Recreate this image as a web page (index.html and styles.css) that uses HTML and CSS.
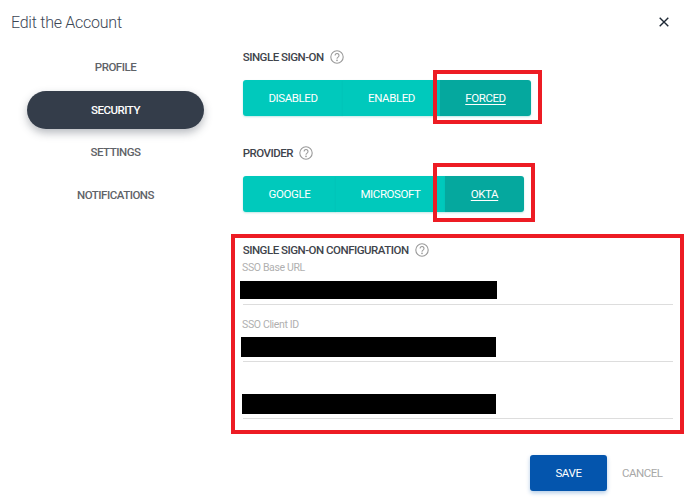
FILE: index.html
```html
<!DOCTYPE html>
<html lang="en">
<head>
<meta charset="utf-8">
<title>Edit the Account</title>
<link rel="stylesheet" href="styles.css">
</head>
<body>
<div class="dialog">
  <header class="head">
    <h1 class="title">Edit the Account</h1>
    <svg class="close" viewBox="0 0 10 10" width="10" height="10"><path d="M.7.7l8.6 8.6M9.3.7L.7 9.3"/></svg>
  </header>
  <div class="body">
    <nav class="side">
      <a class="tab">PROFILE</a>
      <a class="tab tab-on">SECURITY</a>
      <a class="tab">SETTINGS</a>
      <a class="tab">NOTIFICATIONS</a>
    </nav>
    <main class="main">
      <div class="label">SINGLE SIGN-ON <svg class="help" viewBox="0 0 14 14" width="14" height="14"><circle cx="7" cy="7" r="6.2"/><path d="M5.1 5.5a1.95 1.95 0 1 1 3 1.6c-.7.5-1.1.8-1.1 1.6"/><circle class="dot" cx="7" cy="10.4" r=".8"/></svg></div>
      <div class="group">
        <button class="seg seg-a">DISABLED</button>
        <button class="seg seg-b">ENABLED</button>
        <button class="seg seg-c seg-on">FORCED</button>
      </div>
      <div class="label label-next">PROVIDER <svg class="help" viewBox="0 0 14 14" width="14" height="14"><circle cx="7" cy="7" r="6.2"/><path d="M5.1 5.5a1.95 1.95 0 1 1 3 1.6c-.7.5-1.1.8-1.1 1.6"/><circle class="dot" cx="7" cy="10.4" r=".8"/></svg></div>
      <div class="group">
        <button class="seg seg-d">GOOGLE</button>
        <button class="seg seg-e">MICROSOFT</button>
        <button class="seg seg-f seg-on">OKTA</button>
      </div>
      <div class="label label-config">SINGLE SIGN-ON CONFIGURATION <svg class="help" viewBox="0 0 14 14" width="14" height="14"><circle cx="7" cy="7" r="6.2"/><path d="M5.1 5.5a1.95 1.95 0 1 1 3 1.6c-.7.5-1.1.8-1.1 1.6"/><circle class="dot" cx="7" cy="10.4" r=".8"/></svg></div>
      <div class="field field-first">
        <div class="hint">SSO Base URL</div>
        <div class="input"><div class="redact redact-a"></div></div>
      </div>
      <div class="field">
        <div class="hint">SSO Client ID</div>
        <div class="input"><div class="redact redact-b"></div></div>
      </div>
      <div class="field">
        <div class="hint">&nbsp;</div>
        <div class="input"><div class="redact redact-c"></div></div>
      </div>
    </main>
  </div>
  <footer class="foot">
    <button class="save">SAVE</button>
    <button class="cancel">CANCEL</button>
  </footer>
  <div class="mark mark-1"></div>
  <div class="mark mark-2"></div>
  <div class="mark mark-3"></div>
</div>
</body>
</html>
```
FILE: styles.css
```css
* { box-sizing: border-box; }
html, body { margin: 0; padding: 0; background: #fff; }
body { font-family: Roboto, "Liberation Sans", sans-serif; }
.dialog { position: relative; width: 688px; height: 502px; overflow: hidden; }

.head { height: 44px; display: flex; align-items: center; justify-content: space-between; padding: 0 19px 0 11px; }
.title { margin: 0; font-size: 16px; font-weight: 300; color: #3c4654; letter-spacing: -.25px; }
.close { fill: none; stroke: #1f2935; stroke-width: 1.4; }

.body { display: flex; }
.side { width: 231px; padding: 4px 0 0 27px; display: flex; flex-direction: column; flex: none; }
.tab { width: 177px; height: 38px; margin-bottom: 4px; display: flex; align-items: center; justify-content: center; font-size: 11.5px; letter-spacing: -.5px; font-weight: 500; color: #5f6368; border-radius: 19px; }
.tab:nth-child(odd) { margin-bottom: 5px; }
.tab-on { background: #343d4a; color: #fff; box-shadow: 0 4px 8px rgba(52, 61, 74, .35); }

.main { width: 440px; margin-left: 12px; padding-top: 3px; flex: none; }
.label { height: 20px; padding-bottom: 1px; display: flex; align-items: center; gap: 5px; font-size: 11.5px; letter-spacing: -.5px; font-weight: 500; color: #3f444c; margin-left: -.3px; }
.label-next { margin-top: 27px; }
.label-config { margin-top: 28px; }
.help { fill: none; stroke: #9a9a9a; stroke-width: 1.1; margin-left: 1px; }
.help .dot { fill: #9a9a9a; stroke: none; }

.group { margin-top: 13px; display: flex; height: 36px; }
.seg { border: 0; padding: 0; height: 36px; background: #00c9bc; color: #fff; font: 400 11.5px Roboto, "Liberation Sans", sans-serif; letter-spacing: -.4px; box-shadow: 0 1px 2px rgba(0, 160, 150, .25); }
.seg:first-child { border-radius: 3px 0 0 3px; }
.seg:last-child { border-radius: 0 3px 3px 0; }
.seg-on { background: #05a89e; text-decoration: underline; text-underline-offset: 2px; }
.seg-a { width: 100px; }
.seg-b { width: 97px; }
.seg-c { width: 91px; }
.seg-d { width: 93px; }
.seg-e { width: 109px; }
.seg-f { width: 79px; }

.field { margin-top: 12px; padding-right: 10px; }
.field-first { margin-top: 0; }
.hint { height: 14px; line-height: 16px; font-size: 10.5px; letter-spacing: -.35px; color: #b0b0b0; margin-left: -1px; }
.input { height: 31px; border-bottom: 1.5px solid #ddd; padding-top: 6px; }
.redact { height: 20px; background: #000; }
.redact-a { width: 257px; height: 18px; margin: 1px 0 0 -3px; }
.redact-b { width: 255px; margin-left: -2px; }
.redact-c { width: 254px; margin-left: -1px; }

.foot { margin-top: 36px; display: flex; align-items: center; padding-left: 530px; }
.save { width: 77px; height: 36px; border: 0; border-radius: 3px; background: #0455ad; color: #fff; font: 400 11.5px Roboto, "Liberation Sans", sans-serif; letter-spacing: -.4px; box-shadow: 0 2px 4px rgba(4, 85, 173, .3); }
.cancel { margin: 0 0 0 15px; padding: 0; border: 0; background: none; color: #a8a8a8; font: 400 11.5px Roboto, "Liberation Sans", sans-serif; letter-spacing: -.5px; }

.mark { position: absolute; border: 4px solid #ed1c24; }
.mark-1 { left: 433px; top: 70px; width: 109px; height: 54px; }
.mark-2 { left: 433px; top: 163px; width: 102px; height: 59px; }
.mark-3 { left: 231px; top: 234px; width: 453px; height: 200px; }
```
